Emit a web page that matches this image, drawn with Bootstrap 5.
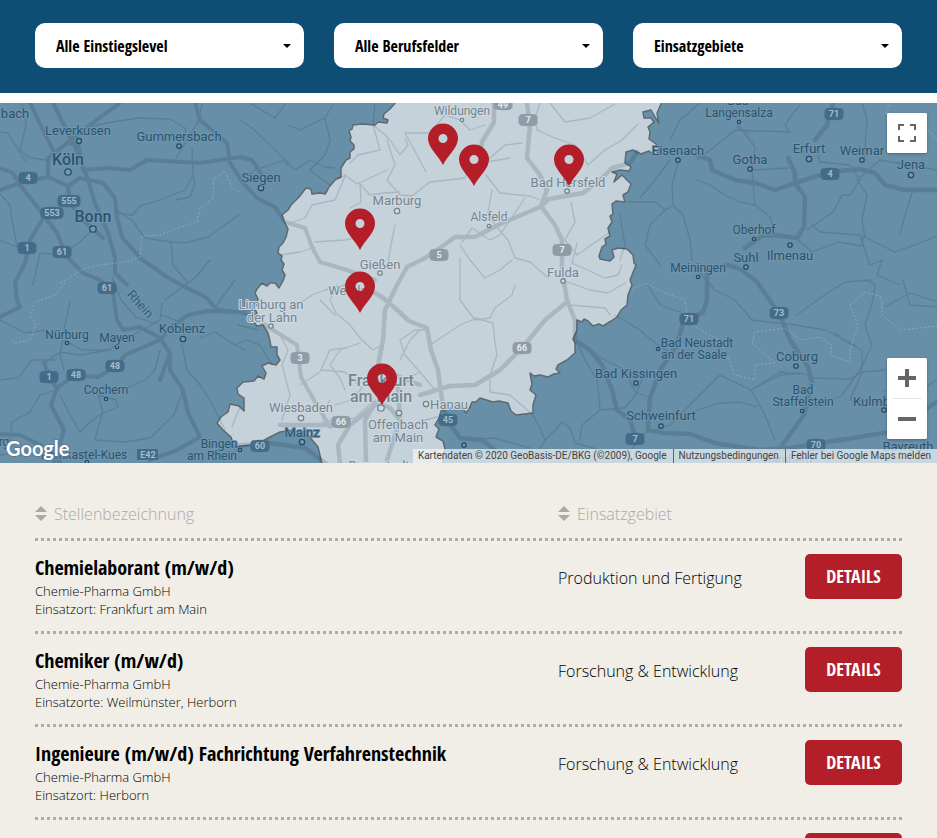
<!DOCTYPE html>
<html lang="de">
<head>
<meta charset="utf-8">
<meta name="viewport" content="width=device-width, initial-scale=1">
<title>Stellenangebote</title>
<link rel="stylesheet" href="https://cdn.jsdelivr.net/npm/bootstrap@5.3.0/dist/css/bootstrap.min.css">
<style>
body{background:#fff;color:#000;font-family:"Open Sans","Noto Sans",sans-serif}
.gutter{padding-left:35px;padding-right:35px}
.filterbar{background:#0f4e74;padding-top:23px;padding-bottom:25px;margin-bottom:10px}
.filters{display:grid;grid-template-columns:repeat(3,1fr);gap:30px}
.filters .form-select,.job-title,.btn-details{font-family:"Open Sans Condensed","Liberation Sans Narrow",sans-serif;font-weight:700}
.filters .form-select{height:45px;border:0;border-radius:10px;padding:0 40px 0 21px;font-size:16px;color:#000;background-color:#fff;background-image:url("data:image/svg+xml,%3Csvg xmlns='http://www.w3.org/2000/svg' viewBox='0 0 8 4'%3E%3Cpath d='M0 0h8L4 4z'/%3E%3C/svg%3E");background-size:8px 4px;background-position:right 13px center}
.mapbox{height:360px;background:#688fa8}
.mapbox>svg{width:100%;height:100%;display:block}
.mapbox text{font-family:Roboto,sans-serif;paint-order:stroke;stroke-width:2px;stroke-linejoin:round}
.lb-dark{fill:#2a536f;stroke:#7095ad;text-anchor:middle}
.lb-lite{fill:#74848f;stroke:#ced9e0;text-anchor:middle}
.mapbox .t11{font-size:12px}.mapbox .t13{font-size:13px}.mapbox .t15{font-size:16px;font-weight:500}
.mapbox .shield text{font-size:9px;font-weight:700;fill:#a5bccb;stroke:none;text-anchor:middle}
.mapbox .shield-lite text{fill:#e3eaee}
.mapbox .logo{font-family:Lato,sans-serif;font-weight:700;font-size:20px;fill:#fff;stroke:#5b7c92;stroke-width:2px}
.map-btn{background:#fff;border:0;width:40px;height:40px;padding:0;display:flex;align-items:center;justify-content:center;border-radius:2px}
.map-ctl{right:10px;background:#fff;border-radius:2px;box-shadow:0 1px 3px rgba(0,0,0,.3)}
.ctl-full{top:10px}
.ctl-zoom{bottom:24px}
.ctl-zoom hr{margin:0 5px;opacity:1;border-color:#e6e6e6}
.credits{right:0;bottom:0;height:14px;background:rgba(245,245,245,.7);font:10px/14px Roboto,sans-serif;padding:0 6px 0 5px}
.credits a,.credits span{color:#444;text-decoration:none}
.credits a{border-left:1px solid #3c6d92;margin-left:6px;padding-left:5px}
.jobs-area{background:#f1eee7;padding-top:32px}
.jobs{width:100%;table-layout:fixed;border-collapse:collapse}
.jobs tr{background:repeating-linear-gradient(90deg,#acacac 0 3px,transparent 3px 6px) left bottom/100% 3px no-repeat}
.jobs .c-area{width:246px}.jobs .c-act{width:98px}
.jobs th{height:46px;padding:0 0 8px;vertical-align:middle}
.sort{border:0;background:none;padding:0;font-size:16px;font-weight:300;color:#a9a9a9;line-height:24px;gap:7px}
.jobs tbody tr{height:93px}
.jobs td{padding:13px 0 0;vertical-align:top}
.job-title{font-size:20px;line-height:28px;margin:0}
.job-meta{font-size:13px;line-height:18px;font-weight:300;margin:0}
.job-area{font-size:16px;line-height:24px;font-weight:300;margin:12px 0 0}
.btn-details{background:#b41e29;color:#fff;font-size:18px;line-height:27px;height:45px;padding:9px 0;width:97px;border:0;border-radius:5px}
</style>
</head>
<body>
<header class="filterbar gutter">
<form class="filters">
<select class="form-select" aria-label="Einstiegslevel"><option>Alle Einstiegslevel</option></select>
<select class="form-select" aria-label="Berufsfelder"><option>Alle Berufsfelder</option></select>
<select class="form-select" aria-label="Einsatzgebiete"><option>Einsatzgebiete</option></select>
</form>
</header>
<section class="mapbox position-relative overflow-hidden" aria-label="Karte">
<svg viewBox="0 103 937 360" preserveAspectRatio="xMidYMid slice">
<defs>
<path id="pin" d="M0 0C-4-9-15-17-15-26.500A15 15 0 0 1 15-26.500C15-17 4-9 0 0ZM0-31a4.500 4.500 0 1 0 0 9a4.500 4.500 0 0 0 0-9Z" fill="#b41e29" fill-rule="evenodd"/>
<path id="sh" d="M-8-5.500Q0-7 8-5.500L9.500-3V3L8 5.500Q0 7-8 5.500L-9.500 3V-3Z"/>
<path id="sw" d="M-10-5.500Q0-7 10-5.500L11.500-3V3L10 5.500Q0 7-10 5.500L-11.500 3V-3Z"/>
</defs>
<!-- Hessen -->
<path fill="#c6d2da" stroke="#5c6973" stroke-width="1.500" stroke-linejoin="round" d="M396 102L390 109 384 114 383 118 388 120 387 123 378 122 375 125 362 124 353 125 352 129 349 131 351 137 350 141 354 145 354 149 350 152 350 158 346 160 341 168 341 177 336 179 329 187 327 191 325 194 320 193 312 194 311 189 306 188 299 197 291 205 288 210 282 215 284 221 288 229 286 237 283 243 279 247 278 253 282 256 281 260 284 264 282 270 285 275 283 281 279 288 275 283 270 283 267 286 262 283 257 289 255 293 258 299 257 304 254 308 257 313 253 321 257 326 263 325 268 333 270 341 271 347 277 347 277 355 280 360 276 365 268 363 262 366 266 373 264 379 258 376 254 381 243 382 237 388 238 394 244 398 244 411 239 406 230 404 228 412 221 417 217 423 223 430 231 437 234 447 250 445 259 443 270 437 280 432 293 430 301 434 308 435 318 447 322 464H443L443 455 445 449 443 441 436 437 439 429 435 425 439 418 441 411 451 408 460 405 466 413 470 407 472 402 476 402 480 398 493 402 499 401 508 403 511 411 516 415 533 413 533 405 536 395 530 390 532 384 530 373 534 376 540 375 548 377 554 374 560 373 556 369 558 365 567 360 575 353 575 343 573 339 577 330 577 320 582 322 584 319 588 321 593 326 599 324 603 326 611 321 617 317 621 310 627 305 628 295 632 285 630 280 636 265 634 263 633 255 627 249 618 248 612 250 614 257 610 261 600 259 599 256 602 247 606 244 605 239 610 236 608 228 612 222 610 216 613 214 612 204 616 201 625 202 623 195 628 192 631 184 626 179 622 175 614 182 617 174 612 172 620 170 629 171 631 167 625 163 626 152 633 150 641 154 649 151 654 155 660 151 656 144 649 139 650 132 648 127 654 122 651 118 644 118 643 112 651 110 655 117 659 123 657 113 662 102Z"/>
<g fill="none" stroke="#0a2535" stroke-linejoin="round" stroke-linecap="round" opacity=".15">
<!-- Autobahnen -->
<path stroke-width="4" d="M0 168L13 173 20 185 42 213 57 233 67 257 83 273 100 280 113 293 117 320 123 330 140 327 160 338 170 353V370L183 390 188 413 200 437 177 450 150 460M42 220L30 240 25 263 15 283 17 300 20 307 0 317M0 190L20 183 48 177 68 186 80 178 103 183 115 198 117 217 122 237 140 258 167 277 187 288 207 298 217 310 240 312 255 318 273 330 297 345 301 377 314 400 330 427M48 177V158L67 143 78 144 83 170 107 168 130 170 147 160 200 163 240 157 252 160 262 175M30 103L43 130 53 150M53 103L68 133 78 153 87 177 95 203 108 233 115 257 115 273 127 285M68 187L70 203 83 220 103 238M120 103L87 127 67 143M195 103L200 120 227 143 230 163 243 183 257 198 275 207 285 222 305 228 312 247 320 262 347 270 375 280M0 434L20 435 44 447 60 462M54 462L64 430 51 405 57 388 75 375 98 377 115 367 125 355 160 340M160 340L170 328 188 315 207 311 240 312M44 363L50 378 57 388M160 380L170 353"/>
<path stroke-width="4.500" d="M378 365L383 340 385 310 397 285 407 267 425 258 440 248 455 237 475 237 500 224 540 207 549 199 583 193 600 180 612 168 630 163 637 152M494 103V122L482 142 480 155M527 103L530 125 527 158 540 175 547 190 541 206 555 225 562 240V270L567 300 575 320 575 340 590 350 602 365 612 390 617 410 630 420 635 435M420 395L450 386 475 385 500 370 522 348 545 320 567 302M370 290L382 297 395 308 409 321 427 328 431 350 438 370 442 400 447 420 460 438 482 440 500 454M697 155L710 160 712 170 735 180 755 183 775 190 795 183 830 172 860 169 875 173 885 185 905 190 937 190M833 103L827 125 815 140M788 158L795 173V183L805 197 804 227 797 238 775 235 762 236 745 248M707 290V270L728 265 740 269 755 280M707 270V300L703 312 683 323 677 345 660 370 650 398 648 430 665 433 690 434 715 443 740 447 760 450 790 448 840 440 890 432 937 402M757 282L780 315 790 340 808 367 812 382 804 415 780 448M230 446L270 443 305 448 335 470M280 425H350L378 403 390 408 400 420M350 425L338 445 340 463M375 403L365 420 366 463M420 385L395 375 378 365M387 460L400 420 398 386"/>
<!-- Landstraßen -->
<path stroke-width="1.300" d="M0 132L8 133 16 146 26 162M0 240L17 247 13 225 10 205 0 194M22 103L26 125 20 150 30 158 46 160M88 127L112 122 138 118 170 119 185 128 187 140 176 158M187 140L198 122 202 105M192 148L193 175 185 190 160 200 140 206 133 215 115 213M193 175L195 184 190 197 176 200M119 212L132 220 145 238 171 242 185 243 208 237 240 214M171 242L173 265 188 283M210 260L195 278 178 290 165 300M162 303L160 320 120 342 109 350 80 355 60 352 45 363M40 253L62 255 82 240 90 232M40 253L33 285M0 320L25 333 45 330 60 338 82 350 111 350M70 302L65 325 60 355 64 370M0 380L18 378 32 360 55 360M57 390L40 395 30 412 12 422 10 440M60 395L70 415 80 432 95 418 103 413 98 395 116 400 118 407 102 414 97 432 95 440 125 442 150 438 174 415 183 390M127 388L145 380 155 370 160 350M182 345L187 370 200 385 210 400 225 430M200 338L215 332 235 345 245 350M215 310L220 300 235 280M112 277L121 300 136 317 160 325M162 315L182 323 186 315M240 120L252 128 270 145 295 170 310 160 325 167 335 168M250 103L275 118 288 100 295 100M288 125L300 130 325 118 333 105M325 118L330 140 325 155 310 170 330 185M240 179L255 170 285 160 288 166M375 103L373 125 383 133 390 140 400 155 408 145 405 138M373 125L380 150 358 155 350 163M387 140L395 165 387 180 400 195 412 196 430 182 465 178 470 165 510 158M387 170L357 184 345 175 337 180M345 176L335 200 312 205 305 218 290 223M360 184L361 202 350 208M360 184L370 195 384 193 400 192M315 242L345 240 370 234M280 255L300 252 315 247M395 225L392 240 388 262M405 133H430L445 115 460 120 470 130 485 125M405 133L417 155 426 172M540 103L535 118 537 130 555 138 575 145 588 165 605 150 622 140 638 124M550 103L565 122 590 118 615 104M522 143L505 145 490 158 480 175M486 175L500 193 530 196 540 200M492 190L488 213 495 225 508 240 515 258 530 262 548 278M525 198L500 235 490 240 472 228 462 242M460 245L470 260 485 278 500 270 512 260M460 258L460 300 475 320 490 318 495 308 512 295 515 285M571 202L575 222 565 240 577 255 610 232M577 243L572 263 605 278 618 275 622 265M562 280L590 290 608 293 625 283M570 305L605 308 610 315M475 318L493 323 495 343 497 355 490 375M490 375V392L510 395 533 415M337 285L330 300 336 313 350 325 360 338 373 350 382 345M360 343L340 350 330 365 340 378 345 390M302 302L312 295 325 290 345 285M320 300L335 315M395 385L420 372 435 390 460 385M400 360L410 340 420 330M420 372L405 355 400 340 415 330 425 330M460 325L445 335 430 345M460 325L477 318M280 335L288 350 282 365 290 395 282 420M300 385L320 372 330 350 345 348M322 370L345 372 362 388 352 400 335 405M330 400L323 412M322 422L355 418 375 400M418 422L437 417M238 325L258 330M234 345L247 340 260 345 272 365M232 313L250 310M575 338L585 360 597 380 600 408M575 343L605 360 625 370 635 392 648 397M600 410L625 408 635 396 642 380M600 410L582 425 580 440M533 415L540 428 545 440 530 462M545 440L555 430 562 422 570 428 575 443 600 450M465 440L495 438 530 448M615 315L640 330 655 343 670 353M648 285L660 305 680 312M625 462L640 435 670 425 720 375 751 390 780 372 800 374M697 270L715 290 735 300 752 320 795 325 825 330 855 345M751 390L765 415 775 440M751 390L780 375 800 373 815 378 850 379 862 372 885 370M860 370L842 395 815 408M862 372L862 350 843 340 835 332M862 372L850 400 880 402 888 412M860 370L872 345 865 325 873 300 875 285 867 280M797 315L820 298 845 282 872 280M903 280L910 305 937 307M795 237L812 252 838 242 862 246 863 236 895 252 920 243 937 236M812 225L820 232 860 235 870 265 882 260 877 275 900 285M807 230L833 212 842 195 850 195 860 180 850 165 820 162 818 155M865 237L862 220 867 195 857 180 880 160 937 170M749 133L737 127 740 120M740 127L755 147 752 168 753 184 755 205 770 217 775 230M752 170L788 168M697 180L710 185 725 195 740 202 755 205M697 160L717 145 735 130 790 132M700 103L680 120 670 140M790 132L785 125 792 115 800 105M862 103L867 120 864 160M913 190L905 215 900 235M678 163L672 185 673 205 665 210 655 202 628 202M665 210L650 225 645 245 660 265M673 205L683 215 690 240 692 260M620 215L625 245 620 260M670 160L655 180 640 198M883 390L902 400 920 390 937 380M697 410L720 403 740 402 757 407M885 307L910 293 937 302M0 455L28 451 60 457M240 407L232 427"/>
</g>
<path fill="none" stroke="#a3bdcd" stroke-width="1" stroke-dasharray="2 2" opacity=".6" d="M60 283L85 268 100 265 125 262 140 257 142 236 160 235 178 228 197 222 200 208 213 198 214 178 225 171 232 188 240 192M65 283L55 295 35 302 30 315 36 325 30 340 15 343 10 338M632 290L645 283 665 293 685 300 688 320 700 330 720 340 735 375 755 380 755 365 775 363M775 363L752 343 755 332 785 328 800 340 820 337 832 345 830 355 850 362 850 350 858 325 850 305 865 292 882 297 882 315 900 330 937 326M890 105L885 115M928 130L937 140"/>
<!-- Straßennummern -->
<g class="shield" fill="#426c88">
<use href="#sh" x="28" y="178"/><text x="28" y="181">4</text>
<use href="#sw" x="69" y="201"/><text x="69" y="204">555</text>
<use href="#sw" x="52" y="213"/><text x="52" y="216">553</text>
<use href="#sh" x="27" y="248"/><text x="27" y="251">1</text>
<use href="#sh" x="62" y="252"/><text x="62" y="255">61</text>
<use href="#sh" x="107" y="288"/><text x="107" y="291">61</text>
<use href="#sh" x="49" y="377"/><text x="49" y="380">1</text>
<use href="#sh" x="76" y="375"/><text x="76" y="378">48</text>
<use href="#sh" x="115" y="366"/><text x="115" y="369">48</text>
<path d="M137 449h21v11h-21z"/><text x="148" y="458">E42</text>
<use href="#sh" x="260" y="446"/><text x="260" y="449">60</text>
<use href="#sh" x="448" y="420"/><text x="448" y="423">45</text>
<use href="#sh" x="635" y="439"/><text x="635" y="442">7</text>
<use href="#sh" x="689" y="319"/><text x="689" y="322">71</text>
<use href="#sh" x="779" y="313"/><text x="779" y="316">73</text>
<use href="#sh" x="816" y="445"/><text x="816" y="448">70</text>
<use href="#sh" x="834" y="114"/><text x="834" y="117">71</text>
<use href="#sh" x="830" y="174"/><text x="830" y="177">4</text>
</g>
<g class="shield shield-lite" fill="#909ca5">
<use href="#sh" x="503" y="104"/><text x="503" y="108">49</text>
<use href="#sh" x="528" y="120"/><text x="528" y="123">7</text>
<use href="#sh" x="439" y="255"/><text x="439" y="258">5</text>
<use href="#sh" x="562" y="250"/><text x="562" y="253">7</text>
<use href="#sh" x="300" y="358"/><text x="300" y="361">3</text>
<use href="#sh" x="341" y="422"/><text x="341" y="425">66</text>
<use href="#sh" x="522" y="348"/><text x="522" y="351">66</text>
</g>
<!-- Orte -->
<g fill="#7699af" stroke="#224d69" stroke-width="1.300">
<circle cx="79" cy="141" r="2.500"/><circle cx="68" cy="172" r="3.200"/><circle cx="93" cy="229" r="3.200"/><circle cx="179" cy="146" r="2.200"/><circle cx="261" cy="188" r="2.700"/><circle cx="183" cy="339" r="2.700"/><circle cx="67" cy="343" r="1.700"/><circle cx="117" cy="347" r="1.700"/><circle cx="106" cy="399" r="1.700"/><circle cx="302" cy="442" r="2.700"/><circle cx="464" cy="445" r="2.200"/><circle cx="678" cy="160" r="2.200"/><circle cx="739" cy="122" r="1.700"/><circle cx="750" cy="169" r="2.200"/><circle cx="809" cy="159" r="2.700"/><circle cx="862" cy="160" r="2.200"/><circle cx="911" cy="175" r="2.700"/><circle cx="754" cy="239" r="1.700"/><circle cx="790" cy="245" r="2.200"/><circle cx="746" cy="267" r="2.200"/><circle cx="698" cy="277" r="1.700"/><circle cx="658" cy="349" r="1.700"/><circle cx="636" cy="383" r="2.200"/><circle cx="661" cy="426" r="2.200"/><circle cx="796" cy="366" r="2.200"/><circle cx="802" cy="411" r="1.700"/><circle cx="884" cy="410" r="2.200"/><circle cx="87" cy="462" r="1.700"/><circle cx="240" cy="450" r="1.700"/>
</g>
<g fill="#d3dde3" stroke="#74848f" stroke-width="1.300">
<circle cx="462" cy="120" r="1.700"/><circle cx="397" cy="211" r="2.700"/><circle cx="380" cy="273" r="2.200"/><circle cx="489" cy="226" r="1.700"/><circle cx="567" cy="191" r="2.200"/><circle cx="563" cy="281" r="2.200"/><circle cx="271" cy="326" r="2.200"/><circle cx="381" cy="408" r="3.200"/><circle cx="399" cy="413" r="2.700"/><circle cx="426" cy="404" r="2.700"/><circle cx="301" cy="418" r="2.700"/>
</g>
<g class="lb-dark t13">
<text x="15" y="118">bach</text><text x="78" y="135">Leverkusen</text><text x="179" y="141">Gummersbach</text><text x="261" y="182">Siegen</text><text x="182" y="333">Koblenz</text>
<text x="678" y="155">Eisenach</text><text x="750" y="164">Gotha</text><text x="809" y="153">Erfurt</text><text x="862" y="155">Weimar</text><text x="911" y="169">Jena</text><text x="746" y="262">Suhl</text><text x="790" y="260">Ilmenau</text><text x="636" y="378">Bad Kissingen</text><text x="661" y="420">Schweinfurt</text><text x="797" y="361">Coburg</text><text x="302" y="437">Mainz</text><text x="882" y="406">Kulmbach</text><text x="908" y="451">Bayreuth</text>
<text transform="translate(137 307) rotate(48)" fill-opacity=".85">Rhein</text>
</g>
<g class="lb-dark t15"><text x="68" y="165">Köln</text><text x="93" y="222">Bonn</text></g>
<g class="lb-dark t11">
<text x="67" y="339">Nürburg</text><text x="117" y="342">Mayen</text><text x="106" y="394">Cochem</text><text x="84" y="459">Bernkastel-Kues</text><text x="4" y="446">rg</text><text x="219" y="448">Bingen</text><text x="212" y="460">am Rhein</text><text x="738" y="105">Bad</text><text x="739" y="117">Langensalza</text><text x="754" y="234">Oberhof</text><text x="698" y="272">Meiningen</text><text x="697" y="347">Bad Neustadt</text><text x="694" y="359">an der Saale</text><text x="803" y="394">Bad</text><text x="803" y="406">Staffelstein</text>
<text x="788" y="464">Bamberg</text>
</g>
<g class="lb-lite t13">
<text x="462" y="115" class="t11">Wildungen</text><text x="397" y="205">Marburg</text><text x="380" y="269">Gießen</text><text x="489" y="221" class="t11">Alsfeld</text><text x="568" y="187">Bad Hersfeld</text><text x="563" y="277">Fulda</text><text x="271" y="309">Limburg an</text><text x="272" y="322">der Lahn</text><text x="350" y="295">Wetzlar</text><text x="301" y="412">Wiesbaden</text><text x="398" y="429">Offenbach</text><text x="398" y="442">am Main</text><text x="449" y="409">Hanau</text><text x="379" y="470">Darmstadt</text>
</g>
<g class="lb-lite t15"><text x="381" y="386">Frankfurt</text><text x="381" y="402">am Main</text></g>
<use href="#pin" x="443" y="165"/><use href="#pin" x="474" y="186"/><use href="#pin" x="569" y="186"/><use href="#pin" x="360" y="250"/><use href="#pin" x="360" y="313"/><use href="#pin" x="382" y="405"/>
<text x="6" y="456" class="logo">Google</text>
</svg>
<div class="map-ctl ctl-full position-absolute"><button type="button" class="map-btn" aria-label="Vollbild"><svg width="18" height="18" fill="#666"><path d="M0 0h6v2H2v4H0zM12 0h6v6h-2V2h-4zM0 12h2v4h4v2H0zM16 12h2v6h-6v-2h4z"/></svg></button></div>
<div class="map-ctl ctl-zoom position-absolute">
<button type="button" class="map-btn" aria-label="Vergrößern"><svg width="18" height="18" fill="#666"><path d="M7 0h4v7h7v4h-7v7H7v-7H0V7h7z"/></svg></button>
<hr>
<button type="button" class="map-btn" aria-label="Verkleinern"><svg width="18" height="18" fill="#666"><path d="M0 7h18v4H0z"/></svg></button>
</div>
<div class="credits position-absolute d-flex"><span>Kartendaten © 2020 GeoBasis-DE/BKG (©2009), Google</span><a href="#">Nutzungsbedingungen</a><a href="#">Fehler bei Google Maps melden</a></div>
</section>
<main class="jobs-area gutter">
<table class="jobs">
<thead><tr>
<th><button class="sort d-flex align-items-center" type="button"><svg width="12" height="16" fill="#a9a9a9" aria-hidden="true"><path d="M0 6L6 0 12 6zM0 9H12L6 15z"/></svg>Stellenbezeichnung</button></th>
<th class="c-area"><button class="sort d-flex align-items-center" type="button"><svg width="12" height="16" fill="#a9a9a9" aria-hidden="true"><path d="M0 6L6 0 12 6zM0 9H12L6 15z"/></svg>Einsatzgebiet</button></th>
<th class="c-act"></th>
</tr></thead>
<tbody>
<tr><td><h2 class="job-title">Chemielaborant (m/w/d)</h2><p class="job-meta">Chemie-Pharma GmbH</p><p class="job-meta">Einsatzort: Frankfurt am Main</p></td><td><p class="job-area">Produktion und Fertigung</p></td><td class="text-end"><button type="button" class="btn btn-details">DETAILS</button></td></tr>
<tr><td><h2 class="job-title">Chemiker (m/w/d)</h2><p class="job-meta">Chemie-Pharma GmbH</p><p class="job-meta">Einsatzorte: Weilmünster, Herborn</p></td><td><p class="job-area">Forschung &amp; Entwicklung</p></td><td class="text-end"><button type="button" class="btn btn-details">DETAILS</button></td></tr>
<tr><td><h2 class="job-title">Ingenieure (m/w/d) Fachrichtung Verfahrenstechnik</h2><p class="job-meta">Chemie-Pharma GmbH</p><p class="job-meta">Einsatzort: Herborn</p></td><td><p class="job-area">Forschung &amp; Entwicklung</p></td><td class="text-end"><button type="button" class="btn btn-details">DETAILS</button></td></tr>
<tr><td></td><td></td><td class="text-end"><button type="button" class="btn btn-details">DETAILS</button></td></tr>
</tbody>
</table>
</main>
<script src="https://cdn.jsdelivr.net/npm/bootstrap@5.3.0/dist/js/bootstrap.bundle.min.js"></script>
</body>
</html>
